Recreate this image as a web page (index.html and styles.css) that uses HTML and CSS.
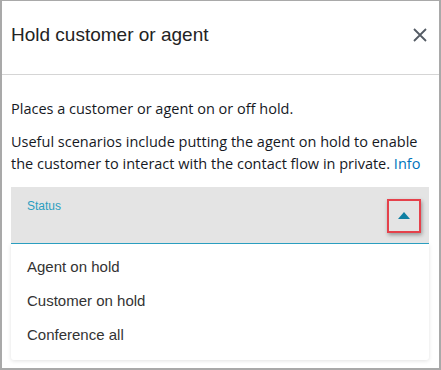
FILE: index.html
```html
<!DOCTYPE html>
<html>
<head>
<meta charset="utf-8">
<link rel="stylesheet" href="styles.css">
</head>
<body>
<div class="panel">
  <div class="header">
    <div class="title">Hold customer or agent</div>
    <svg class="close" width="14" height="14" viewBox="0 0 14 14"><path d="M1 1 L13 13 M13 1 L1 13" stroke="#545b64" stroke-width="1.8" fill="none"/></svg>
  </div>
  <div class="body">
    <p class="p1">Places a customer or agent on or off hold.</p>
    <p class="p2">Useful scenarios include putting the agent on hold to enable the customer to interact with the contact flow in private. <span class="info">Info</span></p>
    <div class="select">
      <div class="label">Status</div>
      <div class="arrowbox"><svg width="12" height="7" viewBox="0 0 12 7"><path d="M0 7 L6 0 L12 7 Z" fill="#0f7fa2"/></svg></div>
    </div>
    <div class="menu">
      <div class="item">Agent on hold</div>
      <div class="item">Customer on hold</div>
      <div class="item">Conference all</div>
    </div>
  </div>
</div>
</body>
</html>
```
FILE: styles.css
```css
html, body { margin: 0; padding: 0; background: #fff; }
.panel {
  width: 441px; height: 370px; box-sizing: border-box;
  border: 1px solid #a9a9a9; border-left-width: 2px; border-right-width: 2px; border-bottom-width: 2px;
  background: #fff;
}
.header {
  height: 74px; box-sizing: border-box;
  border-bottom: 1px solid #d5d5d5;
  display: flex; align-items: center; justify-content: space-between;
  padding: 0 12px 6px 9px;
}
.title { font-family: "Liberation Sans", Arial, sans-serif; font-size: 19px; color: #232323; }
.close { display: block; }
.body { padding: 0 10px 0 9px; }
.p1, .p2 { font-family: "Open Sans", sans-serif; font-size: 14.5px; color: #16191f; margin: 0; line-height: 22px; }
.p1 { padding-top: 23px; }
.p2 { padding-top: 11px; }
.info { color: #0073bb; }
.select {
  margin-top: 12px; height: 57px; box-sizing: border-box;
  background: #e4e4e4; border-bottom: 1px solid #2a9ec0;
  position: relative;
}
.label { font-family: "Liberation Sans", Arial, sans-serif; font-size: 12px; color: #2a9ec0; position: absolute; left: 16px; top: 12px; }
.arrowbox {
  position: absolute; left: 376px; top: 12px; width: 30px; height: 30px;
  border: 2px solid #e5414b; box-shadow: 1px 2px 4px rgba(0,0,0,0.35);
  display: flex; align-items: center; justify-content: center;
}
.arrowbox svg { display: block; margin-top: -2px; }
.menu {
  background: #fff; box-shadow: 0 1px 4px rgba(0,0,0,0.12); border-radius: 0 0 3px 3px;
  padding: 6px 0 8px;
}
.item { font-family: "Liberation Sans", Arial, sans-serif; font-size: 15px; color: #333; height: 34px; line-height: 34px; padding-left: 16px; }
```
